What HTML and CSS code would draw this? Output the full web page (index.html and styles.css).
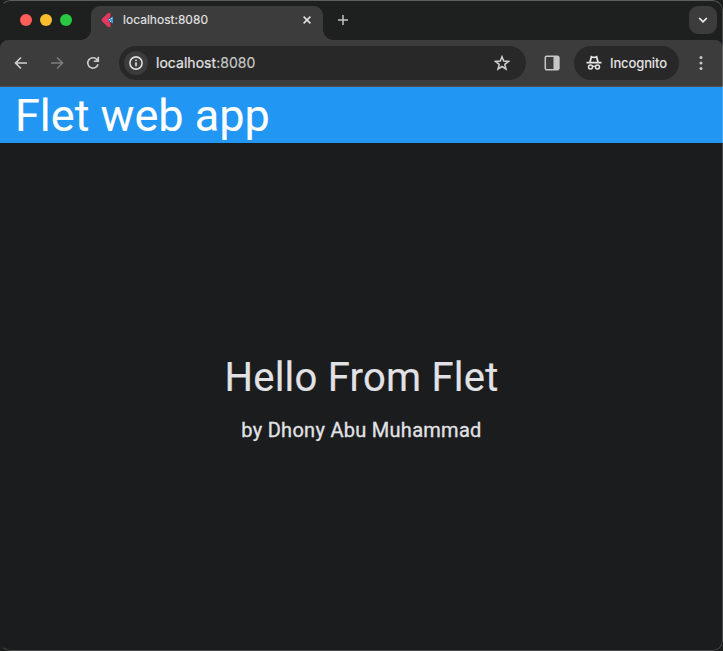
FILE: index.html
```html
<!DOCTYPE html>
<html lang="en">
<head>
<meta charset="utf-8">
<title>Flet web app</title>
<link rel="stylesheet" href="styles.css">
</head>
<body>
<div class="window">
  <header class="tabstrip">
    <div class="lights"><i class="light red"></i><i class="light yellow"></i><i class="light green"></i></div>
    <div class="tab">
      <svg class="favicon" width="14" height="16" viewBox="0 0 14 16"><path d="M7 1h2.5v3.5L7 8l2.5 3.5V15H7L1 9.3Q0 8 1 6.7z" fill="#e5365f"/><path d="M6.5 8L12 4.6v6.8z" fill="#3d9ee5"/><path d="M8 7h1v1H8zM10 6h1v1h-1zM9 9h1v1H9z" fill="#c5e8fb"/></svg>
      <span class="tab-title">localhost:8080</span>
      <svg class="close" width="8" height="8" viewBox="0 0 8 8"><path d="M.6.6l6.8 6.8M7.4.6L.6 7.4" stroke="#e3e3e3" stroke-width="1.5"/></svg>
    </div>
    <svg class="plus" width="10" height="10" viewBox="0 0 10 10"><path d="M5 0v10M0 5h10" stroke="#c4c4c4" stroke-width="1.5"/></svg>
    <div class="tab-search"><svg width="10" height="8" viewBox="0 0 10 8"><path d="M1.2 2L5 5.8 8.8 2" fill="none" stroke="#eee" stroke-width="1.7"/></svg></div>
  </header>
  <nav class="toolbar">
    <svg class="back" width="14" height="14" viewBox="0 0 14 14"><path d="M13 7H2M7 1.5L1.5 7 7 12.5" fill="none" stroke="#d0d0d0" stroke-width="1.6"/></svg>
    <svg class="forward" width="14" height="14" viewBox="0 0 14 14"><path d="M1 7h11M7 1.5L12.5 7 7 12.5" fill="none" stroke="#7d7d7d" stroke-width="1.5"/></svg>
    <svg class="reload" width="14" height="14" viewBox="0 0 14 14"><path d="M12 8.2A5.2 5.2 0 1 1 10.8 3.4L12 4.7M12.3 .8v4.5H7.8" fill="none" stroke="#d0d0d0" stroke-width="1.6"/></svg>
    <div class="address">
      <span class="info"><svg width="14" height="14" viewBox="0 0 14 14"><circle cx="7" cy="7" r="6.1" fill="none" stroke="#ddd" stroke-width="1.6"/><path d="M7 6.2v4M7 3.5v1.6" stroke="#ddd" stroke-width="1.6"/></svg></span>
      <span class="url">localhost<b>:8080</b></span>
      <svg class="star" width="16" height="16" viewBox="0 0 16 16"><path d="M8 1.7l1.7 4.3 4.8.4-3.7 3 1.2 4.6L8 11.5 4 14l1.2-4.6-3.7-3 4.8-.4z" fill="none" stroke="#d0d0d0" stroke-width="1.5"/></svg>
    </div>
    <svg class="panel" width="16" height="16" viewBox="0 0 16 16"><rect x="1.3" y="1.3" width="13.4" height="13.4" rx="1.3" fill="none" stroke="#c7c7c7" stroke-width="1.5"/><path d="M9.5 1H14l1.4 1v12L14 15H9.5z" fill="#c7c7c7"/></svg>
    <div class="incognito">
      <svg width="16" height="16" viewBox="0 0 16 16"><path d="M.5 7.7h15" stroke="#e5e5e5" stroke-width="1.7"/><path d="M4 7L5.4 1.7Q8 3 10.6 1.7L12 7" fill="none" stroke="#e5e5e5" stroke-width="1.8"/><circle cx="4.5" cy="12" r="2" fill="none" stroke="#e5e5e5" stroke-width="1.5"/><circle cx="11.5" cy="12" r="2" fill="none" stroke="#e5e5e5" stroke-width="1.5"/><path d="M6.3 11.6Q8 10.8 9.7 11.6" fill="none" stroke="#e5e5e5" stroke-width="1.2"/></svg>
      <span>Incognito</span>
    </div>
    <svg class="more" width="4" height="16" viewBox="0 0 4 16"><g fill="#c7c7c7"><circle cx="2" cy="2.5" r="1.5"/><circle cx="2" cy="8" r="1.5"/><circle cx="2" cy="13.5" r="1.5"/></g></svg>
  </nav>
  <div class="appbar"><h1>Flet web app</h1></div>
  <main class="content">
    <p class="hello">Hello From Flet</p>
    <p class="author">by Dhony Abu Muhammad</p>
  </main>
</div>
</body>
</html>
```
FILE: styles.css
```css
* { box-sizing: border-box; }
body { margin: 0; background: #1d1f1f; color: #e2e2e6; font-family: Roboto, sans-serif; }
svg { display: block; flex: none; }
h1, p { margin: 0; white-space: nowrap; }
.window { position: relative; width: 723px; height: 651px; overflow: hidden; display: flex; flex-direction: column; background: #1b1c1e; border-radius: 10px; }
.window::after { content: ""; position: absolute; inset: 0; border: 1px solid rgba(255, 255, 255, .2); border-left-color: transparent; border-top-color: #5b5e5c; border-radius: 10px; pointer-events: none; }
.tabstrip { flex: none; height: 40px; display: flex; background: #1e2020; }
.lights { display: flex; gap: 8px; padding: 14px 0 0 20px; width: 91px; }
.light { width: 12px; height: 12px; border-radius: 50%; }
.red { background: #ff5f57; }
.yellow { background: #fdbc2e; }
.green { background: #28c840; }
.tab { position: relative; display: flex; align-items: center; width: 232px; height: 34px; margin-top: 6px; padding: 0 12px 6px 10px; background: #3c3c3c; border-radius: 9px 9px 0 0; }
.tab::before, .tab::after { content: ""; position: absolute; bottom: 0; width: 10px; height: 10px; }
.tab::before { left: -10px; background: radial-gradient(circle at 0 0, transparent 9.5px, #3c3c3c 10px); }
.tab::after { right: -10px; background: radial-gradient(circle at 100% 0, transparent 9.5px, #3c3c3c 10px); }
.tab-title { margin-left: 8px; flex: 1; color: #e3e3e3; font: 12px/16px Inter, sans-serif; letter-spacing: .02px; -webkit-text-stroke: .15px; }
.plus { margin: 15px 0 0 15px; }
.tab-search { display: flex; align-items: center; justify-content: center; width: 28px; height: 28px; margin: 6px 6px 0 auto; background: #3c3c3c; border-radius: 9px; }
.toolbar { flex: none; height: 47px; display: flex; align-items: center; background: #3c3c3c; border-bottom: 1px solid #505050; border-radius: 8px 8px 0 0; }
.back { margin-left: 14px; }
.forward { margin-left: 22px; }
.reload { margin-left: 22px; }
.address { display: flex; align-items: center; width: 407px; height: 34px; margin-left: 19px; padding: 0 16px 0 5px; background: #282828; border-radius: 17px; }
.info { display: flex; align-items: center; justify-content: center; width: 24px; height: 24px; border-radius: 50%; background: #3c3c3c; }
.url { flex: 1; margin-left: 8px; color: #e3e3e3; font: 14px/18px Inter, sans-serif; letter-spacing: .04px; -webkit-text-stroke: .2px; }
.url b { font-weight: 400; color: #c7c7c7; }
.panel { margin-left: 18px; }
.incognito { display: flex; align-items: center; gap: 8px; width: 105px; height: 34px; margin-left: 14px; padding-left: 12px; border-radius: 17px; background: #282828; color: #e3e3e3; font: 500 13px/18px Inter, sans-serif; letter-spacing: -.12px; }
.more { margin-left: 20px; }
.appbar { flex: none; height: 56px; padding-left: 15px; background: #2196f3; color: #fff; }
.appbar h1 { font-size: 45px; line-height: 58px; font-weight: 400; -webkit-text-stroke: .1px; }
.content { flex: 1; display: flex; flex-direction: column; align-items: center; padding-top: 210px; }
.hello { font-size: 40px; line-height: 50px; letter-spacing: .23px; -webkit-text-stroke: .15px; }
.author { margin-top: 13px; font-size: 20px; line-height: 28px; letter-spacing: .28px; -webkit-text-stroke: .3px; }
```
